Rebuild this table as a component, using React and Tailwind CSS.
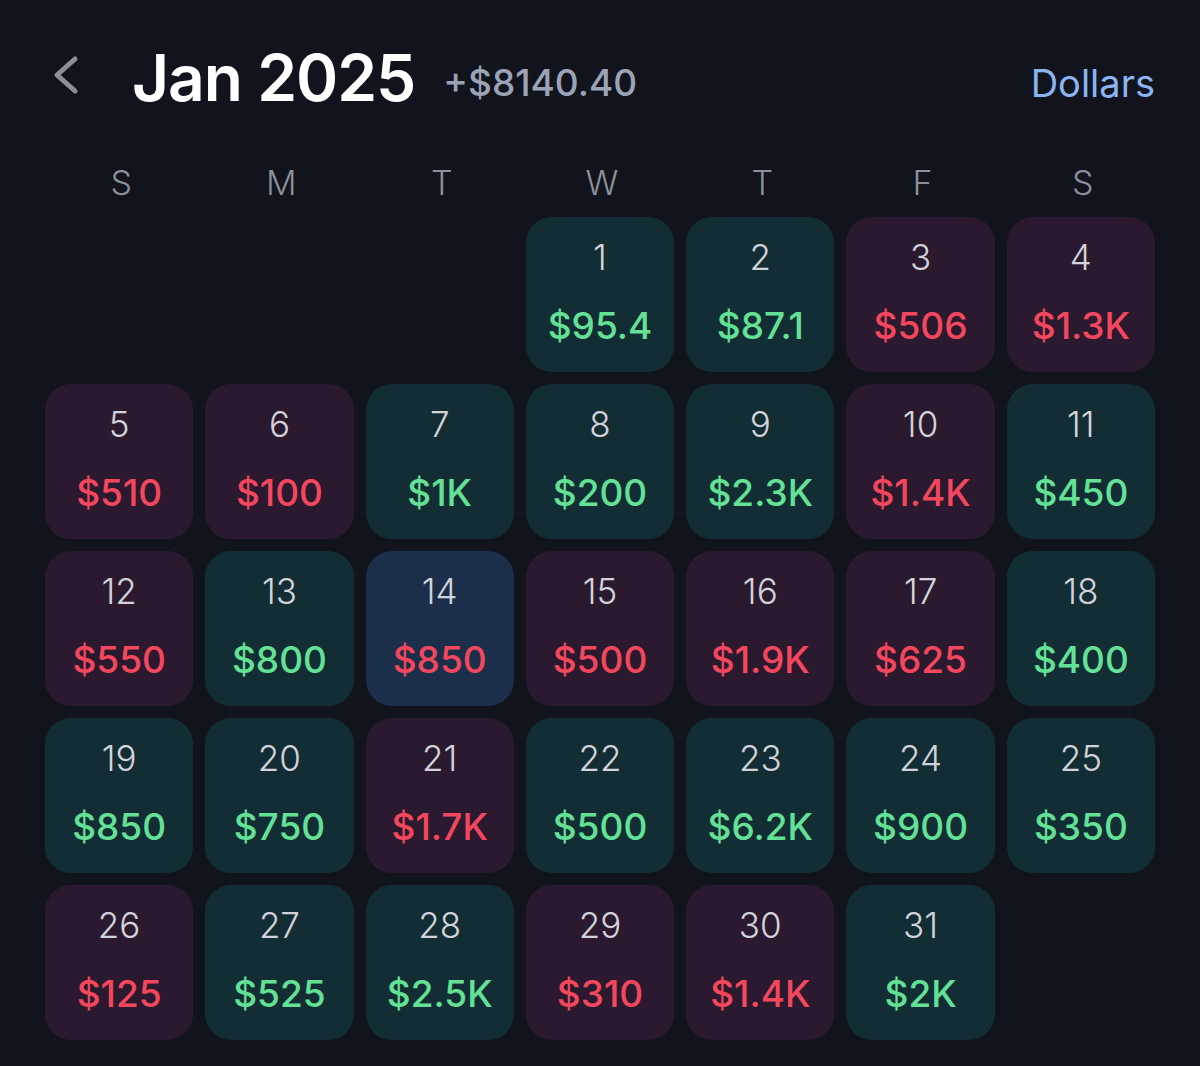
import React from "react";

const days = [
  null, null, null,
  [1, "g", "$95.4"], [2, "g", "$87.1"], [3, "r", "$506"], [4, "r", "$1.3K"],
  [5, "r", "$510"], [6, "r", "$100"], [7, "g", "$1K"], [8, "g", "$200"], [9, "g", "$2.3K"], [10, "r", "$1.4K"], [11, "g", "$450"],
  [12, "r", "$550"], [13, "g", "$800"], [14, "b", "$850"], [15, "r", "$500"], [16, "r", "$1.9K"], [17, "r", "$625"], [18, "g", "$400"],
  [19, "g", "$850"], [20, "g", "$750"], [21, "r", "$1.7K"], [22, "g", "$500"], [23, "g", "$6.2K"], [24, "g", "$900"], [25, "g", "$350"],
  [26, "r", "$125"], [27, "g", "$525"], [28, "g", "$2.5K"], [29, "r", "$310"], [30, "r", "$1.4K"], [31, "g", "$2K"],
];

const bgs = { g: "bg-[#132d35]", r: "bg-[#2b1a2f]", b: "bg-[#1c2f4a]" };

function Cell({ d }) {
  if (!d) return <div />;
  const [n, kind, amt] = d;
  return (
    <div className={`${bgs[kind]} h-[155px] rounded-[26px] flex flex-col items-center pt-[20px]`}>
      <div className="h-[40px] leading-[40px] text-[35px] font-light text-[#d2d3da]">{n}</div>
      <div
        className={`mt-[27px] h-[44px] leading-[44px] text-[37px] font-medium ${
          kind === "g" ? "text-[#63e195]" : "text-[#f4475d]"
        }`}
      >
        {amt}
      </div>
    </div>
  );
}

export default function App() {
  return (
    <div
      className="w-[1200px] h-[1066px] bg-[#11141c] overflow-hidden px-[45px] pt-[40px]"
      style={{ fontFamily: "Inter, 'Noto Sans', sans-serif" }}
    >
      <div className="flex items-center h-[76px]">
        <svg width="30" height="44" viewBox="0 0 30 44" className="ml-[6px] -mt-[4px]">
          <polyline
            points="24,5 6,21 24,37"
            fill="none"
            stroke="#8d8f97"
            strokeWidth="5"
            strokeLinecap="round"
            strokeLinejoin="round"
          />
        </svg>
        <div className="ml-[51px] text-[64px] font-semibold text-white tracking-[-1px]">Jan 2025</div>
        <div className="ml-[28px] mt-[10px] text-[37px] font-medium text-[#9ba3b7]">+$8140.40</div>
        <div className="ml-auto mt-[10px] text-[38px] text-[#8ab4f2]">Dollars</div>
      </div>
      <div className="grid grid-cols-7 gap-x-[12px] mt-[41px] h-[50px] items-center">
        {["S", "M", "T", "W", "T", "F", "S"].map((w, i) => (
          <div key={i} className="text-center text-[34px] font-light text-[#8e9099] pl-[4px]">
            {w}
          </div>
        ))}
      </div>
      <div className="grid grid-cols-7 gap-x-[12px] gap-y-[12px] mt-[10px]">
        {days.map((d, i) => (
          <Cell key={i} d={d} />
        ))}
      </div>
    </div>
  );
}
